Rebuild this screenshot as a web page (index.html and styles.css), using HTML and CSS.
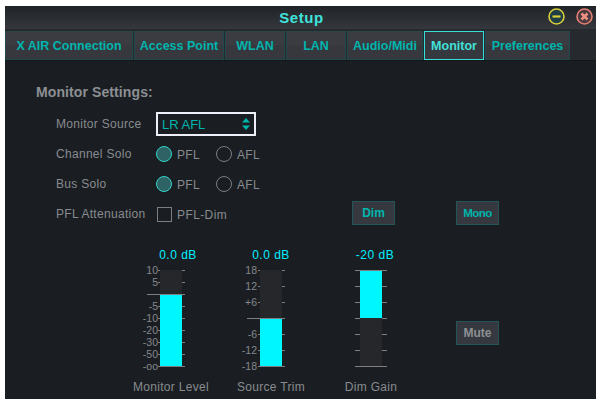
FILE: index.html
```html
<!DOCTYPE html>
<html lang="en">
<head>
    <meta charset="UTF-8">
    <meta name="viewport" content="width=device-width, initial-scale=1.0">
    <title>Setup</title>
    <link rel="stylesheet" href="styles.css">
</head>
<body>

    <div class="window">

        <header class="titlebar">
            <h1 class="title">Setup</h1>
            <div class="win-buttons">
                <svg class="win-icon" width="17" height="17" viewBox="0 0 17 17">
                    <circle cx="8.5" cy="8.5" r="7.5" fill="#1f3d44" stroke="#d8cf3a" stroke-width="1.6"/>
                    <path d="M4.5 8.5H12.5" stroke="#d8cf3a" stroke-width="2.2"/>
                </svg>
                <svg class="win-icon" width="17" height="17" viewBox="0 0 17 17">
                    <circle cx="8.5" cy="8.5" r="7.5" fill="#4a3a3e" stroke="#e47f72" stroke-width="1.6"/>
                    <path d="M5.5 5.5L11.5 11.5M11.5 5.5L5.5 11.5" stroke="#ee8f82" stroke-width="2.6"/>
                </svg>
            </div>
        </header>

        <nav class="tabs">
            <div class="tab tab-xair">X AIR Connection</div>
            <div class="tab tab-ap">Access Point</div>
            <div class="tab tab-wlan">WLAN</div>
            <div class="tab tab-lan">LAN</div>
            <div class="tab tab-audio">Audio/Midi</div>
            <div class="tab tab-monitor active">Monitor</div>
            <div class="tab tab-prefs">Preferences</div>
        </nav>

        <main class="panel">
            <h2 class="panel-title">Monitor Settings:</h2>

            <div class="row row-source">
                <span class="row-label">Monitor Source</span>
                <div class="select">
                    <span>LR AFL</span>
                    <svg width="8" height="12" viewBox="0 0 8 12">
                        <path d="M4 0L8 4.5H0Z M0 7.5H8L4 12Z" fill="#00b5ad"/>
                    </svg>
                </div>
            </div>

            <div class="row">
                <span class="row-label">Channel Solo</span>
                <span class="radio on"></span><span class="opt opt-first">PFL</span>
                <span class="radio"></span><span class="opt">AFL</span>
            </div>

            <div class="row">
                <span class="row-label">Bus Solo</span>
                <span class="radio on"></span><span class="opt opt-first">PFL</span>
                <span class="radio"></span><span class="opt">AFL</span>
            </div>

            <div class="row">
                <span class="row-label">PFL Attenuation</span>
                <span class="check"></span><span class="opt opt-dim">PFL-Dim</span>
                <button class="btn btn-dim">Dim</button>
                <button class="btn btn-mono">Mono</button>
            </div>

            <div class="faders">
                <div class="fader">
                    <div class="fader-value value-level">0.0 dB</div>
                    <svg class="scale" width="100" height="100" viewBox="0 0 100 100">
                        <rect class="track" x="39" y="2" width="22" height="96"/>
                        <rect class="fill" x="39" y="26" width="22" height="72"/>
                        <path class="tick" d="M37 2.5h2M61 2.5h3M37 14.5h2M61 14.5h3M26 26.5h38M37 38.5h2M61 38.5h3M37 50.5h2M61 50.5h3M37 62.5h2M61 62.5h3M37 74.5h2M61 74.5h3M37 86.5h2M61 86.5h3M37 98.5h27"/>
                        <text class="tick-label" x="37" y="6">10</text>
                        <text class="tick-label" x="37" y="18">5</text>
                        <text class="tick-label" x="37" y="42">-5</text>
                        <text class="tick-label" x="37" y="54">-10</text>
                        <text class="tick-label" x="37" y="66">-20</text>
                        <text class="tick-label" x="37" y="78">-30</text>
                        <text class="tick-label" x="37" y="90">-50</text>
                        <text class="tick-label" x="37" y="102">-oo</text>
                    </svg>
                    <div class="fader-name">Monitor Level</div>
                </div>

                <div class="fader">
                    <div class="fader-value">0.0 dB</div>
                    <svg class="scale" width="100" height="100" viewBox="0 0 100 100">
                        <rect class="track" x="39" y="2" width="22" height="96"/>
                        <rect class="fill" x="39" y="50" width="22" height="48"/>
                        <path class="tick" d="M37 2.5h2M61 2.5h3M37 18.5h2M61 18.5h3M37 34.5h2M61 34.5h3M26 50.5h38M37 66.5h2M61 66.5h3M37 82.5h2M61 82.5h3M37 98.5h27"/>
                        <text class="tick-label" x="36" y="6">18</text>
                        <text class="tick-label" x="36" y="22">12</text>
                        <text class="tick-label" x="36" y="38">+6</text>
                        <text class="tick-label" x="36" y="70">-6</text>
                        <text class="tick-label" x="36" y="86">-12</text>
                        <text class="tick-label" x="36" y="102">-18</text>
                    </svg>
                    <div class="fader-name">Source Trim</div>
                </div>

                <div class="fader">
                    <div class="fader-value value-dim">-20 dB</div>
                    <svg class="scale" width="100" height="100" viewBox="0 0 100 100">
                        <rect class="track" x="39" y="2" width="22" height="96"/>
                        <rect class="fill" x="39" y="2" width="22" height="48"/>
                        <path class="tick" d="M34 2.5h32M34 18.5h5M61 18.5h5M34 34.5h5M61 34.5h5M34 50.5h5M61 50.5h5M34 66.5h5M61 66.5h5M34 82.5h5M61 82.5h5M34 98.5h32"/>
                    </svg>
                    <div class="fader-name">Dim Gain</div>
                </div>

                <button class="btn btn-mute">Mute</button>
            </div>
        </main>
    </div>

</body>
</html>
```

FILE: styles.css
```css
body {
    margin: 0;
    background-color: #fff;
    font-family: "Liberation Sans", Arial, sans-serif;
}

.window {
    width: 591px;
    height: 393px;
    margin: 6px 0 0 5px;
    background-color: #1a1e22;
    overflow: hidden;
}

.titlebar {
    height: 22px;
    padding-bottom: 1px;
    display: flex;
    align-items: center;
    justify-content: center;
    background: linear-gradient(#202327, #34373b);
    position: relative;
}

.title {
    margin: 0;
    padding-left: 2px;
    font-size: 15px;
    font-weight: bold;
    letter-spacing: 0.6px;
    color: #3fe3dc;
}

.win-buttons {
    position: absolute;
    top: 2px;
    right: 3px;
    display: flex;
    gap: 11px;
}

.tabs {
    height: 31px;
    display: flex;
    background-color: #26292d;
    border-bottom: 1px solid #14171a;
}

.tab {
    height: 29px;
    margin-top: 2px;
    margin-right: 1px;
    display: flex;
    align-items: center;
    justify-content: center;
    box-sizing: border-box;
    border: 1px solid #1f4a4c;
    border-top-color: #2a4448;
    background: linear-gradient(#3a3c42 0, #3a3c42 50%, #36383e 50%, #36383e 100%);
    font-size: 12.5px;
    font-weight: bold;
    color: #00b5ad;
}

.tab-xair { width: 128px; }
.tab-ap { width: 90px; }
.tab-wlan { width: 60px; }
.tab-lan { width: 60px; }
.tab-audio { width: 76px; }
.tab-monitor { width: 60px; }
.tab-prefs { width: 85px; }

.tab.active {
    border-color: #35e0d8;
    background: #35383e;
    color: #40e0d8;
}

.panel {
    padding: 23px 0 0 31px;
}

.panel-title {
    margin: 0 0 9px;
    font-size: 14px;
    line-height: 16px;
    font-weight: bold;
    letter-spacing: 0.1px;
    color: #8c8f93;
}

.row {
    height: 30px;
    display: flex;
    align-items: center;
    padding-left: 20px;
    font-size: 12px;
    color: #888b8f;
}

.row-label {
    width: 100px;
    letter-spacing: 0.3px;
}

.select {
    width: 100px;
    height: 24px;
    box-sizing: border-box;
    border: 2px solid #efeffa;
    padding: 0 4px;
    display: flex;
    align-items: center;
    justify-content: space-between;
    color: #00b5ad;
    font-size: 13px;
}

.radio {
    width: 16px;
    height: 16px;
    box-sizing: border-box;
    border: 1px solid #7b7e82;
    border-radius: 50%;
}

.radio.on {
    background-color: #2f6264;
    border-color: #2fd6cc;
}

.opt {
    margin-top: 2px;
    margin-left: 5px;
    letter-spacing: 0.3px;
}

.opt-first {
    width: 39px;
}

.opt-dim {
    width: 175px;
    letter-spacing: 0.4px;
}

.check {
    width: 15px;
    height: 15px;
    margin-left: 1px;
    box-sizing: border-box;
    border: 1px solid #7b7e82;
}

.btn {
    width: 43px;
    height: 24px;
    padding: 0;
    border: 1px solid #225556;
    background-color: #35383e;
    font-family: inherit;
    font-size: 12px;
    font-weight: bold;
    color: #00b5ad;
}

.btn-dim, .btn-mono {
    margin-top: -2px;
}

.btn-mono {
    margin-left: 61px;
    font-size: 11.5px;
    letter-spacing: -0.6px;
}

.btn-mute {
    margin: 73px 0 0 35px;
    color: #8c8f93;
}

.faders {
    display: flex;
    padding-left: 85px;
    margin-top: 19px;
    align-items: flex-start;
}

.fader {
    width: 100px;
    text-align: center;
}

.fader-value {
    font-size: 12px;
    line-height: 14px;
    letter-spacing: 0.5px;
    color: #00eeff;
}

.value-level {
    padding-left: 14px;
}

.value-dim {
    padding-left: 8px;
}

.scale {
    display: block;
    margin-top: 6px;
    overflow: visible;
}

.track { fill: #25272b; }
.fill { fill: #00f6ff; }

.tick {
    stroke: #7b7e82;
    stroke-width: 1;
    fill: none;
}

.tick-label {
    font-size: 10.5px;
    fill: #84878b;
    text-anchor: end;
}

.fader-name {
    margin-top: 12px;
    font-size: 12px;
    line-height: 14px;
    letter-spacing: 0.3px;
    color: #888b8f;
}
```
